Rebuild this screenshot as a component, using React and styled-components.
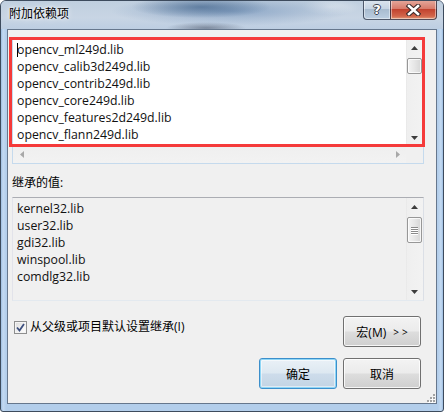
import React from 'react';
import styled, { createGlobalStyle, css } from 'styled-components';

const UI_FONT = `"Open Sans", "Noto Sans CJK SC", sans-serif`;

const GlobalStyle = createGlobalStyle`
  html, body { margin: 0; padding: 0; background: #ffffff; }
  body { font-family: ${UI_FONT}; }
  * { box-sizing: border-box; }
`;

const Window = styled.div`
  width: 444px;
  height: 412px;
  display: flex;
  flex-direction: column;
  border: 1px solid #3d4b5d;
  border-radius: 6px 6px 3px 3px;
  overflow: hidden;
  background: linear-gradient(
    to right,
    #9dbde0 0,
    #c4daf2 2px,
    #b3ceeb 5px,
    #b3ceeb calc(100% - 5px),
    #c4daf2 calc(100% - 2px),
    #9dbde0 100%
  );
  font-family: ${UI_FONT};
  font-size: 12px;
  color: #000;
`;

const TitleBar = styled.div`
  height: 28px;
  flex-shrink: 0;
  display: flex;
  justify-content: space-between;
  align-items: flex-start;
  padding-left: 8px;
  background:
    radial-gradient(ellipse 70px 11px at 200px 6px, rgba(55, 90, 130, 0.6), rgba(55, 90, 130, 0)),
    radial-gradient(ellipse 120px 15px at 230px 10px, rgba(100, 135, 178, 0.6), rgba(100, 135, 178, 0)),
    radial-gradient(ellipse 40px 6px at 205px 27px, rgba(60, 70, 90, 0.5), rgba(60, 70, 90, 0)),
    radial-gradient(ellipse 30px 8px at 330px 6px, rgba(255, 255, 255, 0.35), rgba(255, 255, 255, 0)),
    linear-gradient(to bottom, #c0cfdf, #c8d5e4 60%, #bdcee2);
`;

const Title = styled.div`
  margin-top: 5px;
  line-height: 16px;
  font-size: 12px;
  color: #000;
  text-shadow: 0 0 6px rgba(255, 255, 255, 0.9), 0 0 3px rgba(255, 255, 255, 0.8);
`;

const CaptionButtons = styled.div`
  display: flex;
  margin-top: -1px;
  margin-right: 6px;
`;

const CaptionButton = styled.div`
  height: 20px;
  display: flex;
  align-items: center;
  justify-content: center;
  border: 1px solid rgba(35, 45, 65, 0.75);
  border-top: none;
  box-shadow: inset 0 0 0 1px rgba(255, 255, 255, 0.45);
`;

const HelpButton = styled(CaptionButton)`
  width: 27px;
  border-right: none;
  border-radius: 0 0 0 4px;
  background: linear-gradient(to bottom, #dce5ef 0%, #c6d4e3 45%, #a9bcd0 50%, #bccee1 100%);
`;

const CloseButton = styled(CaptionButton)`
  width: 47px;
  border-radius: 0 0 4px 0;
  background: linear-gradient(to bottom, #e6aa9e 0%, #d87b6b 45%, #c2432f 50%, #d2654b 85%, #e29a78 100%);
`;

const HelpGlyph = styled.span`
  font-family: "DejaVu Sans", sans-serif;
  font-weight: bold;
  font-size: 13px;
  line-height: 13px;
  color: #fff;
  text-shadow: 1px 0 0 #3a4250, -1px 0 0 #3a4250, 0 1px 0 #3a4250, 0 -1px 0 #3a4250;
`;

const Client = styled.div`
  position: relative;
  flex: 1;
  margin: 0 6px 7px 6px;
  background: #f0f0f0;
  border: 1px solid #66778d;
  padding: 8px 12px 0 4px;
  display: flex;
  flex-direction: column;
`;

const EditArea = styled.div`
  position: relative;
  height: 126px;
  flex-shrink: 0;
`;

const boxBorder = css`
  border: 1px solid;
  border-color: #abadb3 #dbdfe6 #e3e9ef #e2e3ea;
`;

const EditBox = styled.div`
  ${boxBorder};
  height: 100%;
  background: #ffffff;
  display: grid;
  grid-template-columns: 1fr 17px;
  grid-template-rows: 1fr 17px;
  border-color: #abadb3 #c5daed #c5daed #c5daed;
`;

const Lines = styled.div`
  padding: 2px 4px;
  line-height: 17px;
  font-size: 12.3px;
  white-space: pre;
  overflow: hidden;
  color: #111;
`;

const Caret = styled.span`
  display: inline-block;
  width: 1px;
  height: 14px;
  margin-right: -1px;
  background: #000;
  vertical-align: -3px;
`;

const Highlight = styled.div`
  position: absolute;
  left: -3px;
  top: -1px;
  width: 416px;
  height: 110px;
  border: 3px solid #f53a3a;
  pointer-events: none;
`;

const Track = styled.div`
  display: flex;
  flex-direction: column;
  background: linear-gradient(to right, #e4e4e4 0, #efefef 1px, #f2f2f2 100%);
`;

const HTrack = styled.div`
  display: flex;
  align-items: center;
  justify-content: space-between;
  padding: 0 6px 0 7px;
  background: linear-gradient(to bottom, #e4e4e4 0, #efefef 1px, #f2f2f2 100%);
`;

const Corner = styled.div`
  background: #f0f0f0;
`;

const ArrowCell = styled.div`
  height: 17px;
  flex-shrink: 0;
  display: flex;
  align-items: center;
  justify-content: center;
`;

const ThumbSpace = styled.div`
  flex: 1;
  display: flex;
  flex-direction: column;
  align-items: center;
`;

const Thumb = styled.div`
  width: 15px;
  height: ${(p) => p.$h}px;
  margin-top: 2px;
  border: 1px solid #979797;
  border-radius: 2px;
  background: linear-gradient(to right, #f4f4f4 0%, #e6e6e6 50%, #d6d6d6 100%);
  box-shadow: inset 0 0 0 1px rgba(255, 255, 255, 0.75);
  display: flex;
  flex-direction: column;
  align-items: center;
  justify-content: center;
  gap: 1px;
`;

const GripLine = styled.div`
  width: 7px;
  height: 1px;
  background: #8a8a8a;
  box-shadow: 0 1px 0 #ffffff;
`;

const Arrow = ({ dir, color = '#3c3c3c' }) => {
  const pts = {
    up: '0,4 3.5,0 7,4',
    down: '0,0 7,0 3.5,4',
    left: '4,0 4,7 0,3.5',
    right: '0,0 4,3.5 0,7',
  }[dir];
  const horiz = dir === 'left' || dir === 'right';
  return (
    <svg width={horiz ? 4 : 7} height={horiz ? 7 : 4} viewBox={horiz ? '0 0 4 7' : '0 0 7 4'}>
      <polygon points={pts} fill={color} />
    </svg>
  );
};

const VScroll = ({ thumb, grip }) => (
  <Track>
    <ArrowCell>
      <Arrow dir="up" />
    </ArrowCell>
    <ThumbSpace>
      <Thumb $h={thumb}>
        {grip && (
          <>
            <GripLine />
            <GripLine />
            <GripLine />
            <GripLine />
          </>
        )}
      </Thumb>
    </ThumbSpace>
    <ArrowCell>
      <Arrow dir="down" />
    </ArrowCell>
  </Track>
);

const Label = styled.div`
  margin-top: 9px;
  height: 20px;
  line-height: 20px;
  font-size: 12px;
`;

const ListBox = styled.div`
  ${boxBorder};
  margin-top: 4px;
  height: 104px;
  flex-shrink: 0;
  background: #f0f0f0;
  display: grid;
  grid-template-columns: 1fr 17px;
`;

const OptionsRow = styled.div`
  margin-top: 15px;
  display: flex;
  justify-content: space-between;
  align-items: flex-start;
  padding-right: 3px;
`;

const CheckLabel = styled.div`
  margin-top: 4px;
  margin-left: 2px;
  height: 14px;
  display: flex;
  align-items: center;
  gap: 3px;
  line-height: 14px;
  font-size: 12px;
`;

const CheckBox = styled.div`
  width: 13px;
  height: 13px;
  border: 1px solid #8e8f8f;
  background: linear-gradient(135deg, #dcdcdc 0%, #f2f2f2 60%, #ffffff 100%);
  box-shadow: inset 0 0 0 1px #f4f4f4;
  display: flex;
  align-items: center;
  justify-content: center;
`;

const ButtonRow = styled.div`
  margin-top: 11px;
  display: flex;
  justify-content: flex-end;
  gap: 6px;
  padding-right: 3px;
`;

const Button = styled.div`
  width: 78px;
  height: 31px;
  display: flex;
  align-items: center;
  justify-content: center;
  font-size: 12px;
  color: #000;
  border: 1px solid #707070;
  border-radius: 3px;
  background: linear-gradient(to bottom, #f3f3f3 0%, #ebebeb 48%, #dddddd 52%, #cfcfcf 100%);
  box-shadow: inset 0 0 0 1px rgba(255, 255, 255, 0.8);
  ${(p) =>
    p.$default &&
    css`
      border-color: #3c8fcb;
      background: linear-gradient(to bottom, #eaf1f7 0%, #dde8f1 48%, #cddceb 52%, #c3d4e4 100%);
      box-shadow: inset 0 0 0 1px #8fd6f6, inset 0 0 0 2px rgba(255, 255, 255, 0.5);
    `}
`;

const Spaced = styled.span`
  margin-left: 7px;
  letter-spacing: 3px;
  font-size: 10px;
  margin-right: -3px;
`;

const Grip = styled.div`
  position: absolute;
  right: 1px;
  bottom: 1px;
  width: 11px;
  height: 11px;
`;

const topLines = [
  'opencv_ml249d.lib',
  'opencv_calib3d249d.lib',
  'opencv_contrib249d.lib',
  'opencv_core249d.lib',
  'opencv_features2d249d.lib',
  'opencv_flann249d.lib',
];

const inherited = ['kernel32.lib', 'user32.lib', 'gdi32.lib', 'winspool.lib', 'comdlg32.lib'];

export default function App() {
  return (
    <>
      <GlobalStyle />
      <Window>
        <TitleBar>
          <Title>附加依赖项</Title>
          <CaptionButtons>
            <HelpButton>
              <HelpGlyph>?</HelpGlyph>
            </HelpButton>
            <CloseButton>
              <svg width="15" height="12" viewBox="0 0 15 12">
                <path d="M3 2 L12 10 M12 2 L3 10" stroke="#3b2a2a" strokeWidth="4.6" strokeLinecap="square" />
                <path d="M3 2 L12 10 M12 2 L3 10" stroke="#ffffff" strokeWidth="2.6" strokeLinecap="square" />
              </svg>
            </CloseButton>
          </CaptionButtons>
        </TitleBar>
        <Client>
          <EditArea>
            <EditBox>
              <Lines>
                {topLines.map((l, i) => (
                  <div key={l}>
                    {i === 0 && <Caret />}
                    {l}
                  </div>
                ))}
              </Lines>
              <VScroll thumb={16} />
              <HTrack>
                <Arrow dir="left" color="#a8a8a8" />
                <Arrow dir="right" color="#a8a8a8" />
              </HTrack>
              <Corner />
            </EditBox>
            <Highlight />
          </EditArea>
          <Label>继承的值:</Label>
          <ListBox>
            <Lines>
              {inherited.map((l) => (
                <div key={l}>{l}</div>
              ))}
            </Lines>
            <VScroll thumb={26} grip />
          </ListBox>
          <OptionsRow>
            <CheckLabel>
              <CheckBox>
                <svg width="9" height="9" viewBox="0 0 9 9">
                  <path d="M1 4.5 L3.5 7.5 L8 1" fill="none" stroke="#3c4f7e" strokeWidth="1.8" />
                </svg>
              </CheckBox>
              从父级或项目默认设置继承(I)
            </CheckLabel>
            <Button>
              宏(M)<Spaced>&gt;&gt;</Spaced>
            </Button>
          </OptionsRow>
          <ButtonRow>
            <Button $default>确定</Button>
            <Button>取消</Button>
          </ButtonRow>
          <Grip>
            <svg width="11" height="11" viewBox="0 0 11 11">
              {[
                [9, 1],
                [9, 4],
                [6, 4],
                [9, 7],
                [6, 7],
                [3, 7],
              ].map(([x, y]) => (
                <g key={`${x}-${y}`}>
                  <rect x={x + 1} y={y + 1} width="2" height="2" fill="#ffffff" />
                  <rect x={x} y={y} width="2" height="2" fill="#a3a3a3" />
                </g>
              ))}
            </svg>
          </Grip>
        </Client>
      </Window>
    </>
  );
}
